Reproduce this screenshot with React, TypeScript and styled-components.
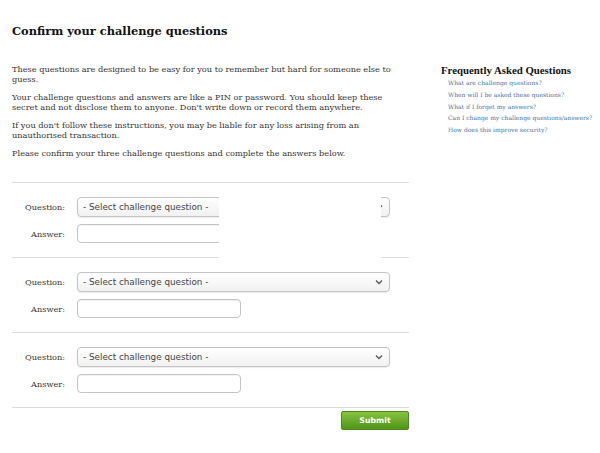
import React from "react";
import styled, { createGlobalStyle } from "styled-components";

const GlobalStyle = createGlobalStyle`
  html, body {
    margin: 0;
    padding: 0;
    background: #ffffff;
  }
  body {
    font-family: "DejaVu Serif", serif;
    color: #333333;
  }
`;

const questions = [1, 2, 3];

const faqLinks = [
  "What are challenge questions?",
  "When will I be asked these questions?",
  "What if I forget my answers?",
  "Can I change my challenge questions/answers?",
  "How does this improve security?",
];

const ChevronDown = () => (
  <svg width="8" height="6" viewBox="0 0 8 6">
    <path d="M1 1.5 L4 4.5 L7 1.5" fill="none" stroke="#555" strokeWidth="1.3" />
  </svg>
);

const App: React.FC = () => {
  return (
    <>
      <GlobalStyle />
      <Page>
        <Main>
          <Title>Confirm your challenge questions</Title>
          <Intro>
            <p>
              These questions are designed to be easy for you to remember but hard for someone else to
              guess.
            </p>
            <p>
              Your challenge questions and answers are like a PIN or password. You should keep these
              secret and not disclose them to anyone. Don't write down or record them anywhere.
            </p>
            <p>
              If you don't follow these instructions, you may be liable for any loss arising from an
              unauthorised transaction.
            </p>
            <p>Please confirm your three challenge questions and complete the answers below.</p>
          </Intro>

          <Form>
            {questions.map((q) => (
              <QuestionBlock key={q}>
                <Label>Question:</Label>
                <SelectBox>
                  <span>- Select challenge question -</span>
                  <ChevronDown />
                </SelectBox>
                <Label>Answer:</Label>
                <AnswerInput />
              </QuestionBlock>
            ))}
            <Redaction />
          </Form>
          <Actions>
            <SubmitButton type="button">Submit</SubmitButton>
          </Actions>
        </Main>

        <Sidebar>
          <FaqTitle>Frequently Asked Questions</FaqTitle>
          <FaqList>
            {faqLinks.map((link) => (
              <li key={link}>
                <a href="#">{link}</a>
              </li>
            ))}
          </FaqList>
        </Sidebar>
      </Page>
    </>
  );
};

const Page = styled.div`
  display: flex;
  align-items: flex-start;
  padding: 22px 0 0 12px;
`;

const Main = styled.div`
  width: 397px;
`;

const Title = styled.h1`
  margin: 0;
  font-family: "DejaVu Serif", serif;
  font-size: 11.4px;
  line-height: 18px;
  font-weight: bold;
  color: #111111;
`;

const Intro = styled.div`
  margin-top: 24px;

  p {
    margin: 0 0 8px;
    font-size: 8.2px;
    line-height: 10px;
    color: #333333;
  }
`;

const Form = styled.div`
  position: relative;
  margin-top: 24px;
  border-bottom: 1px solid #dcdcdc;
`;

const QuestionBlock = styled.div`
  display: grid;
  grid-template-columns: 53px 313px;
  grid-template-rows: 20px 19px;
  column-gap: 12px;
  row-gap: 7px;
  align-items: center;
  padding: 14px 0 14px;
  border-top: 1px solid #dcdcdc;
`;

const Label = styled.div`
  text-align: right;
  font-size: 8.2px;
  color: #333333;
`;

const SelectBox = styled.div`
  display: flex;
  align-items: center;
  justify-content: space-between;
  box-sizing: border-box;
  height: 20px;
  padding: 0 6px 0 5px;
  border: 1px solid #c4c4c4;
  border-radius: 4px;
  background: linear-gradient(#ffffff, #f1f1f1);
  box-shadow: 0 1px 1px rgba(0, 0, 0, 0.08);
  font-family: "DejaVu Sans", sans-serif;
  font-size: 8.8px;
  color: #444444;
`;

const AnswerInput = styled.div`
  box-sizing: border-box;
  width: 164px;
  height: 19px;
  border: 1px solid #c4c4c4;
  border-radius: 4px;
  background: #ffffff;
  box-shadow: inset 0 1px 1px rgba(0, 0, 0, 0.06);
`;

const Actions = styled.div`
  display: flex;
  justify-content: flex-end;
  margin-top: 3px;
`;

const SubmitButton = styled.button`
  width: 68px;
  height: 19px;
  padding: 0;
  border: 1px solid #4d8a1c;
  border-radius: 2px;
  background: linear-gradient(#86c440, #4f9416);
  box-shadow: 0 1px 1px rgba(0, 0, 0, 0.2);
  color: #ffffff;
  font-family: "DejaVu Sans", sans-serif;
  font-size: 7.8px;
  font-weight: bold;
`;

const Redaction = styled.div`
  position: absolute;
  left: 207px;
  top: 5px;
  width: 162px;
  height: 71px;
  background: #ffffff;
`;

const Sidebar = styled.div`
  margin-left: 32px;
  padding-top: 42px;
`;

const FaqTitle = styled.h2`
  margin: 0;
  font-family: "Liberation Serif", serif;
  font-size: 10.8px;
  line-height: 12px;
  font-weight: bold;
  color: #111111;
`;

const FaqList = styled.ul`
  list-style: none;
  margin: 1px 0 0;
  padding: 0 0 0 7px;

  li {
    font-size: 6px;
    line-height: 11.8px;
  }

  a {
    font-family: "DejaVu Serif", serif;
    font-size: 6px;
    color: #4a73a3;
    text-decoration: none;
  }
`;

export default App;
